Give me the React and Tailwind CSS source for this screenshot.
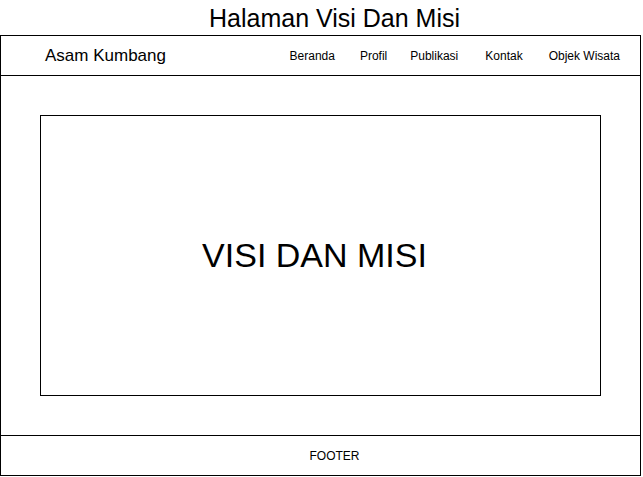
import React from 'react';

const menu = [
  { label: 'Beranda', cls: '' },
  { label: 'Profil', cls: 'ml-[25px]' },
  { label: 'Publikasi', cls: 'ml-[23px]' },
  { label: 'Kontak', cls: 'ml-[27px]' },
  { label: 'Objek Wisata', cls: 'ml-[26px]' },
];

export default function App() {
  return (
    <div className="w-[643px] h-[477px] bg-white text-black font-['Liberation_Sans',Arial,sans-serif]">
      <div className="h-[35px] flex items-center justify-center pl-[26px] pt-[1px] text-[25px] leading-none">
        Halaman Visi Dan Misi
      </div>
      <div className="w-[641px] border border-black flex flex-col">
        <header className="h-[40px] border-b border-black flex items-center pl-[44px] pr-[20px]">
          <div className="text-[17px]">Asam Kumbang</div>
          <nav className="ml-auto flex items-center text-[12px]">
            {menu.map(m => (
              <span key={m.label} className={m.cls}>{m.label}</span>
            ))}
          </nav>
        </header>
        <main className="p-[39px]">
          <div className="h-[281px] border border-black flex items-center justify-center pr-[12px]">
            <span className="text-[34px]">VISI DAN MISI</span>
          </div>
        </main>
        <footer className="h-[40px] border-t border-black flex items-center justify-center pl-[28px] text-[12px]">
          FOOTER
        </footer>
      </div>
    </div>
  );
}
